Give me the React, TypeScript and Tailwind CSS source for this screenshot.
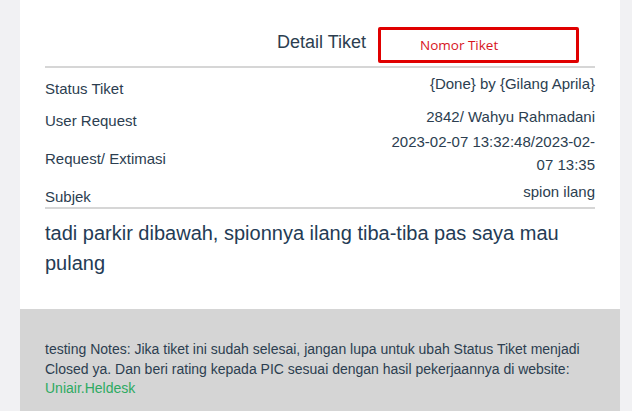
import React from 'react';

const rows = [
  { label: 'Status Tiket', value: '{Done} by {Gilang Aprila}', height: 'h-[33px]', offset: 'mt-[5px]' },
  { label: 'User Request', value: '2842/ Wahyu Rahmadani', height: 'h-[25px]', offset: 'mt-[4px]' },
  { label: 'Request/ Extimasi', value: null, height: 'h-[50px]', offset: 'mt-[17px]' },
  { label: 'Subjek', value: 'spion ilang', height: 'h-[27px]', offset: 'mt-[5px]' },
];

export default function App() {
  return (
    <div className="min-h-screen bg-[#f1f1f3] font-['Liberation_Sans',Arial,sans-serif] text-[#2c3e50]">
      <div className="ml-[20px] w-[600px] bg-white">
        <div className="px-[25px]">
          {/* header */}
          <div className="flex justify-end gap-[12px] border-b-2 border-[#d6d6d6] pt-[27px] pb-[3px] pr-[16px]">
            <h2 className="mt-[5px] text-[18px] leading-[21.6px] text-[#2c3e50]">Detail Tiket</h2>
            <div className="flex h-[36px] w-[201px] items-center rounded-[2px] border-[3px] border-[#e00000] pl-[39px]">
              <span className="font-['Open_Sans',sans-serif] text-[13.5px] text-[#d7141e]">Nomor Tiket</span>
            </div>
          </div>

          {/* detail rows */}
          <div className="border-b-2 border-[#d6d6d6] pt-[4px]">
            {rows.map((row) => (
              <div key={row.label} className={`flex items-start justify-between ${row.height}`}>
                <div className={`${row.offset} text-[15px] leading-[23px]`}>{row.label}</div>
                <div className="max-w-[212px] text-right text-[15px] leading-[23px]">
                  {row.value ?? (
                    <>
                      2023-02-07 13:32:48/2023-02-
                      <br />
                      07 13:35
                    </>
                  )}
                </div>
              </div>
            ))}
          </div>

          <p className="pt-[9px] pb-[31px] text-[20px] leading-[30px] text-[#243b55]">
            tadi parkir dibawah, spionnya ilang tiba-tiba pas saya mau pulang
          </p>
        </div>

        {/* footer */}
        <div className="bg-[#d5d5d5] px-[25px] pt-[31px] pb-[30px]">
          <p className="text-[14px] leading-[19.5px] text-[#2c3e50]">
            testing Notes: Jika tiket ini sudah selesai, jangan lupa untuk ubah Status Tiket menjadi Closed ya. Dan
            beri rating kepada PIC sesuai dengan hasil pekerjaannya di website:{' '}
            <a href="#" className="text-[#2eaa62]">
              Uniair.Heldesk
            </a>
          </p>
        </div>
      </div>
    </div>
  );
}
